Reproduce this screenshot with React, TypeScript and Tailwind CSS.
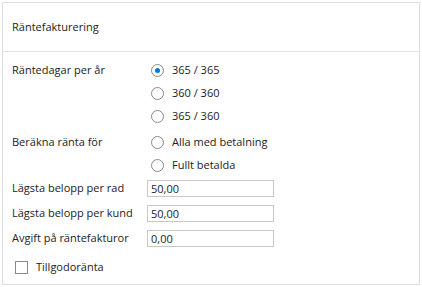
import React from 'react';

const font = { fontFamily: '"Open Sans", "Noto Sans", sans-serif' };

const Radio: React.FC<{ label: string; checked?: boolean }> = ({ label, checked }) => (
  <div className="flex items-center h-[23px]">
    <span className="ml-[4px] w-[13px] h-[13px] rounded-full border border-[#8a8a8a] bg-white flex items-center justify-center">
      {checked && <span className="w-[5px] h-[5px] rounded-full bg-[#0078d7]" />}
    </span>
    <span className="ml-[8px]">{label}</span>
  </div>
);

const Field: React.FC<{ label: string; value: string }> = ({ label, value }) => (
  <div className="flex items-center h-[17px]">
    <span className="w-[135px]">{label}</span>
    <div className="w-[127px] h-[17px] border border-[#c8c8c8] bg-white pl-[3px] flex items-center leading-none">
      {value}
    </div>
  </div>
);

export default function App() {
  return (
    <div className="w-[422px] h-[287px] bg-white pt-[2px] pl-[2px]" style={font}>
      <div className="w-[418px] h-[283px] border border-[#dcdfe2] text-[11px] text-[#222]">
        <div className="h-[49px] flex items-center pl-[9px] border-b border-[#e2e5e8]">
          Räntefakturering
        </div>
        <div className="pl-[9px] pt-[7px]">
          <div className="flex">
            <div className="w-[135px] h-[23px] flex items-center">Räntedagar per år</div>
            <div>
              <Radio label="365 / 365" checked />
              <Radio label="360 / 360" />
              <Radio label="365 / 360" />
            </div>
          </div>
          <div className="flex mt-[3px]">
            <div className="w-[135px] h-[23px] flex items-center">Beräkna ränta för</div>
            <div>
              <Radio label="Alla med betalning" />
              <Radio label="Fullt betalda" />
            </div>
          </div>
          <div className="flex flex-col gap-[8px] mt-[3px]">
            <Field label="Lägsta belopp per rad" value="50,00" />
            <Field label="Lägsta belopp per kund" value="50,00" />
            <Field label="Avgift på räntefakturor" value="0,00" />
          </div>
          <div className="flex items-center mt-[12px] ml-[3px]">
            <span className="w-[13px] h-[13px] border border-[#8a8a8a] bg-white" />
            <span className="ml-[8px]">Tillgodoränta</span>
          </div>
        </div>
      </div>
    </div>
  );
}
